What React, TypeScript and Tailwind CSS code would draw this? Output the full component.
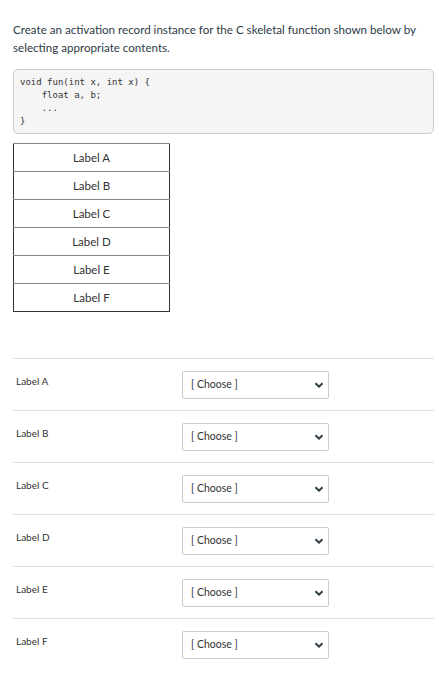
const labels = ['Label A', 'Label B', 'Label C', 'Label D', 'Label E', 'Label F'];

function Chevron() {
  return (
    <svg width="10" height="10" viewBox="0 0 10 10" className="shrink-0">
      <path d="M1.5 3.2 L5 6.7 L8.5 3.2" fill="none" stroke="#2d3b45" strokeWidth="2" />
    </svg>
  );
}

export default function App() {
  return (
    <div className="bg-white min-h-[673px] px-[13px] pt-[21px] pb-4 text-[#2d3b45] font-['Lato','Noto_Sans',sans-serif]">
      <p className="text-[11.6px] leading-[18px]">
        Create an activation record instance for the C skeletal function shown below by selecting appropriate contents.
      </p>

      <pre className="mt-[12px] w-[421px] bg-[#f5f5f5] border border-[#c7cdd1] rounded-[5px] pl-[6px] pt-[6px] pb-[5px] text-[9px] leading-[13px] text-[#333] font-['DejaVu_Sans_Mono',monospace]">
{`void fun(int x, int x) {
    float a, b;
    ...
}`}
      </pre>

      <table className="mt-[9px] w-[157px] border-collapse border border-[#333]">
        <tbody>
          {labels.map((l) => (
            <tr key={l}>
              <td className="h-[28px] border-t border-[#888] text-center text-[11.5px] text-[#333] align-middle">{l}</td>
            </tr>
          ))}
        </tbody>
      </table>

      <div className="mt-[46px] w-[421px]">
        {labels.map((l) => (
          <div key={l} className="flex border-t border-[#dcdfe1] pt-[12px] pb-[11px]">
            <div className="w-[169px] pl-[3px] pt-[3px] text-[10px] leading-[14px] text-[#333]">{l}</div>
            <div className="w-[147px] h-[28px] border border-[#c7cdd1] rounded-[2px] flex items-center justify-between pl-[8px] pr-[4px]">
              <span className="text-[10.5px] text-[#333]">[ Choose ]</span>
              <Chevron />
            </div>
          </div>
        ))}
      </div>
    </div>
  );
}
